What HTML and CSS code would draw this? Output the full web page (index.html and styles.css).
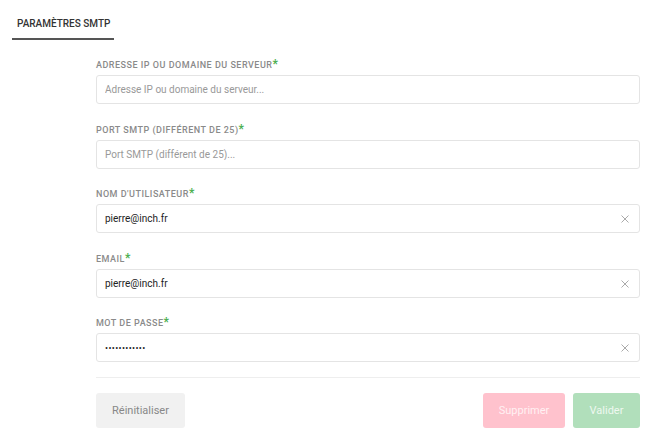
FILE: index.html
```html
<!DOCTYPE html>
<html lang="fr">
<head>
    <meta charset="UTF-8">
    <title>Paramètres SMTP</title>
    <link rel="stylesheet" href="styles.css">
</head>
<body>
    <main>
        <nav class="tabs">
            <div class="tab active">Paramètres SMTP</div>
        </nav>

        <form class="smtp-form">
            <div class="field">
                <label class="field-label">Adresse IP ou domaine du serveur<span class="req">*</span></label>
                <div class="input-wrap">
                    <input class="input" type="text" placeholder="Adresse IP ou domaine du serveur...">
                </div>
            </div>
            <div class="field">
                <label class="field-label">Port SMTP (différent de 25)<span class="req">*</span></label>
                <div class="input-wrap">
                    <input class="input" type="text" placeholder="Port SMTP (différent de 25)...">
                </div>
            </div>
            <div class="field">
                <label class="field-label">Nom d'utilisateur<span class="req">*</span></label>
                <div class="input-wrap">
                    <input class="input" type="text" value="pierre@inch.fr">
                    <svg class="clear" width="8" height="8" viewBox="0 0 8 8"><path d="M0.5 0.5L7.5 7.5M7.5 0.5L0.5 7.5"/></svg>
                </div>
            </div>
            <div class="field">
                <label class="field-label">Email<span class="req">*</span></label>
                <div class="input-wrap">
                    <input class="input" type="text" value="pierre@inch.fr">
                    <svg class="clear" width="8" height="8" viewBox="0 0 8 8"><path d="M0.5 0.5L7.5 7.5M7.5 0.5L0.5 7.5"/></svg>
                </div>
            </div>
            <div class="field">
                <label class="field-label">Mot de passe<span class="req">*</span></label>
                <div class="input-wrap">
                    <input class="input input-password" type="password" value="pierrepierre">
                    <svg class="clear" width="8" height="8" viewBox="0 0 8 8"><path d="M0.5 0.5L7.5 7.5M7.5 0.5L0.5 7.5"/></svg>
                </div>
            </div>

            <div class="actions">
                <button type="button" class="btn btn-reset">Réinitialiser</button>
                <div class="actions-right">
                    <button type="button" class="btn btn-delete">Supprimer</button>
                    <button type="button" class="btn btn-submit">Valider</button>
                </div>
            </div>
        </form>
    </main>
</body>
</html>
```

FILE: styles.css
```css
body {
    margin: 0;
    font-family: Roboto, "Liberation Sans", sans-serif;
    background: #fff;
    color: #333;
}

.tabs {
    display: flex;
    padding: 0 12px;
    height: 40px;
}

.tab {
    text-transform: uppercase;
    white-space: nowrap;
    font-size: 10px;
    font-weight: 500;
    color: #333;
    padding: 18px 4px 0 5px;
    height: 20px;
    border-bottom: 2px solid #555;
}

.smtp-form {
    margin: 0 30px 0 96px;
    padding-top: 17px;
}

.field {
    margin-bottom: 17.5px;
}

.field-label {
    display: block;
    height: 14px;
    line-height: 14px;
    margin-bottom: 4px;
    text-transform: uppercase;
    font-size: 9px;
    font-weight: 500;
    letter-spacing: 0.5px;
    color: #8a8a8a;
}

.req {
    color: #4caf50;
    font-size: 12px;
    font-weight: 700;
}

.input-wrap {
    position: relative;
}

.input {
    display: block;
    box-sizing: border-box;
    width: 100%;
    height: 29px;
    padding: 0 26px 0 8px;
    border: 1px solid #e4e4e4;
    border-radius: 3px;
    font-family: inherit;
    font-size: 10px;
    color: #222;
    outline: none;
}

.input::placeholder {
    color: #999;
}

.input-password {
    font-size: 9px;
    letter-spacing: 0.35px;
}

.clear {
    position: absolute;
    right: 11px;
    top: 11px;
    stroke: #aaa;
    stroke-width: 1;
    fill: none;
}

.actions {
    display: flex;
    justify-content: space-between;
    border-top: 1px solid #eee;
    margin-top: -2.5px;
    padding-top: 15px;
}

.actions-right {
    display: flex;
    gap: 8px;
}

.btn {
    height: 35px;
    border: none;
    border-radius: 3px;
    font-family: inherit;
    font-size: 11px;
    padding: 0 14px;
}

.btn-reset {
    background: #f1f1f1;
    color: #888;
    width: 89px;
}

.btn-delete {
    background: #ffc2cd;
    color: #fff1f3;
    width: 82px;
}

.btn-submit {
    background: #b1dfbb;
    color: #eef8f0;
    width: 67px;
}
```
